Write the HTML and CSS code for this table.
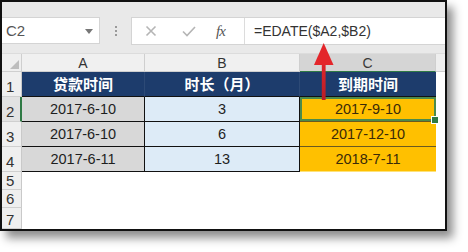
FILE: index.html
```html
<!DOCTYPE html>
<html>
<head>
<meta charset="utf-8">
<link rel="stylesheet" href="styles.css">
</head>
<body>
<div class="frame">
  <div class="toolbar">
    <div class="namebox">
      <span class="nb-text">C2</span>
      <svg class="nb-arrow" width="8" height="5" viewBox="0 0 8 5"><polygon points="0,0 8,0 4,5" fill="#777"/></svg>
    </div>
    <div class="dots"><i></i><i></i><i></i></div>
    <div class="fbox">
      <div class="fbtns">
        <svg class="ic" width="12" height="12" viewBox="0 0 12 12"><path d="M1.5 1.5 L10.5 10.5 M10.5 1.5 L1.5 10.5" stroke="#b5b5b5" stroke-width="1.6"/></svg>
        <svg class="ic ic2" width="14" height="12" viewBox="0 0 14 12"><path d="M1 6.5 L5 10.5 L13 2" stroke="#b5b5b5" stroke-width="1.6" fill="none"/></svg>
        <span class="fx">fx</span>
      </div>
      <div class="ftext">=EDATE($A2,$B2)</div>
    </div>
  </div>
  <div class="grid">
    <div class="corner"><svg width="9" height="9" viewBox="0 0 9 9"><polygon points="9,0 9,9 0,9" fill="#bdbdbd"/></svg></div>
    <div class="ch">A</div>
    <div class="ch">B</div>
    <div class="ch ch-sel">C</div>
    <div class="ch ch-rest"></div>

    <div class="rh">1</div>
    <div class="hd">贷款时间</div>
    <div class="hd">时长（月）</div>
    <div class="hd hd-c">到期时间</div>
    <div class="rest"></div>

    <div class="rh rh-sel">2</div>
    <div class="ca">2017-6-10</div>
    <div class="cb">3</div>
    <div class="cc sel">2017-9-10</div>
    <div class="rest"></div>

    <div class="rh">3</div>
    <div class="ca">2017-6-10</div>
    <div class="cb">6</div>
    <div class="cc">2017-12-10</div>
    <div class="rest"></div>

    <div class="rh">4</div>
    <div class="ca">2017-6-11</div>
    <div class="cb">13</div>
    <div class="cc last">2018-7-11</div>
    <div class="rest"></div>

    <div class="rh sm">5</div>
    <div class="empty"></div>
    <div class="empty"></div>
    <div class="empty"></div>
    <div class="rest"></div>

    <div class="rh sm">6</div>
    <div class="empty"></div>
    <div class="empty"></div>
    <div class="empty"></div>
    <div class="rest"></div>

    <div class="rh sm">7</div>
    <div class="empty"></div>
    <div class="empty"></div>
    <div class="empty"></div>
    <div class="rest"></div>
  </div>
  <svg class="arrow" width="22" height="60" viewBox="0 0 22 60">
    <defs>
      <linearGradient id="g" x1="0" y1="0" x2="0" y2="1">
        <stop offset="0" stop-color="#e3262b"/>
        <stop offset="1" stop-color="#b81d27"/>
      </linearGradient>
    </defs>
    <rect x="8.8" y="18" width="3.8" height="40" fill="url(#g)"/>
    <polygon points="10.7,1 1,23 20.5,23" fill="#e3262b"/>
  </svg>
</div>
</body>
</html>
```
FILE: styles.css
```css
* { box-sizing: border-box; }
html, body { margin: 0; padding: 0; background: #fff; }
body { width: 468px; height: 252px; overflow: hidden; font-family: "Liberation Sans", "Noto Sans CJK SC", sans-serif; }

.frame {
  position: relative;
  width: 447px;
  height: 231px;
  border: 2px solid #111;
  background: #fff;
  box-shadow: 6px 7px 9px rgba(0,0,0,0.45);
  display: flex;
  flex-direction: column;
  overflow: visible;
}

.toolbar {
  height: 52px;
  flex: none;
  background: #e9e9e9;
  display: flex;
  align-items: flex-start;
  padding-top: 15px;
  border-bottom: 1px solid #dcdcdc;
}
.namebox {
  width: 98px;
  height: 27px;
  background: #fff;
  border: 1px solid #d4d4d4;
  border-left: none;
  display: flex;
  align-items: center;
  justify-content: space-between;
  padding: 0 6px 0 4px;
}
.nb-text { font-size: 15px; color: #555; }
.nb-arrow { margin-top: 1px; }
.dots {
  width: 31px;
  height: 27px;
  display: flex;
  flex-direction: column;
  align-items: center;
  justify-content: center;
  gap: 2px;
}
.dots i { display: block; width: 2px; height: 2px; background: #9a9a9a; }
.fbox {
  flex: 1;
  height: 28px;
  background: #fff;
  border: 1px solid #d4d4d4;
  border-right: none;
  display: flex;
}
.fbtns {
  width: 113px;
  border-right: 1px solid #dcdcdc;
  display: flex;
  align-items: center;
  padding-left: 13px;
}
.ic2 { margin-left: 25px; }
.fx {
  margin-left: 20px;
  font-family: "Liberation Serif", serif;
  font-style: italic;
  font-size: 15px;
  color: #555;
  letter-spacing: -1px;
}
.ftext {
  flex: 1;
  font-size: 14px;
  color: #333;
  padding-left: 9px;
  line-height: 27px;
}

.grid {
  flex: 1;
  display: grid;
  grid-template-columns: 20px 123px 155px 136px 1fr;
  grid-template-rows: 18px 25px 25px 25px 25px 18px 18px 1fr;
}

.corner {
  background: #efefef;
  border-right: 1px solid #cfcfcf;
  border-bottom: 1px solid #cfcfcf;
  display: flex;
  align-items: flex-end;
  justify-content: flex-end;
  padding: 0 2px 2px 0;
}
.ch {
  background: #f0f0f0;
  border-right: 1px solid #cfcfcf;
  border-bottom: 1px solid #cfcfcf;
  font-size: 14px;
  color: #333;
  text-align: center;
  line-height: 18px;
}
.ch-sel { background: #d5d5d5; border-bottom: 1px solid #2f7a45; color: #3a3a3a; }
.ch-rest { border-right: none; background: #eeeeee; }

.rh {
  background: #efefef;
  border-right: 1px solid #c9c9c9;
  border-bottom: 1px solid #cfcfcf;
  font-size: 15px;
  color: #333;
  padding-left: 4px;
  display: flex;
  align-items: flex-end;
  line-height: 18px;
}
.rh.sm { line-height: 16px; }
.rh-sel { border-right: 2px solid #2f7a45; background: #e2e2e2; }

.hd {
  background: #1d3c6c;
  color: #fff;
  font-weight: bold;
  font-size: 15px;
  text-align: center;
  line-height: 25px;
  border-right: 1px solid #2d4a76;
  border-bottom: 1px solid #111;
}
.hd-c { border-right: none; }

.ca, .cb, .cc {
  font-size: 14.5px;
  text-align: center;
  line-height: 24px;
  color: #1e1e1e;
  border-bottom: 1px solid #111;
}
.ca { background: #d8d8d8; border-right: 1px solid #111; }
.cb { background: #ddebf7; border-right: 1px solid #111; }
.cc { background: #ffc000; color: #3a2a08; border-bottom: 1px solid #6a5a20; }
.cc.last { border-bottom: 1px solid #fde27a; }
.sel {
  position: relative;
  box-shadow: inset 0 0 0 2px #4c8a4c;
}
.sel::after {
  content: "";
  position: absolute;
  right: -3px;
  bottom: -3px;
  width: 6px;
  height: 6px;
  background: #2f7a45;
  border: 1px solid #fff;
}
.rest { background: #fff; }
.empty { background: #fff; }

.arrow {
  position: absolute;
  left: 311px;
  top: 40px;
}
```
